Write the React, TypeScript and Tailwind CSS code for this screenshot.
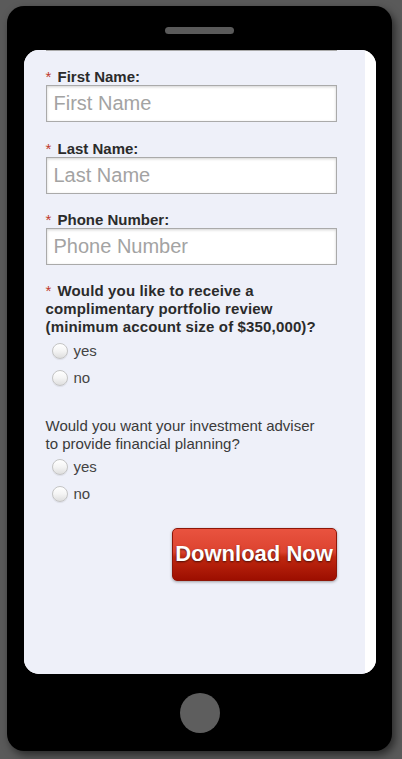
import React from "react";

const font = { fontFamily: '"Liberation Sans", Arial, sans-serif' };

function Field({ label, placeholder, mt }: { label: string; placeholder: string; mt: string }) {
  return (
    <div className={`flex flex-col w-[291px] ${mt}`}>
      <div className="flex text-[15px] leading-[16px] font-bold text-[#2b2b2b] whitespace-nowrap">
        <span className="w-[12px] font-normal text-[#c0392b]">*</span>
        <span>{label}</span>
      </div>
      <input
        readOnly
        placeholder={placeholder}
        className="h-[37px] w-[291px] border border-[#aaaaaa] bg-white px-[7px] text-[20px] text-[#333] placeholder:text-[#a3a3a3] shadow-[inset_0_1px_3px_rgba(0,0,0,0.18)] outline-none"
        style={font}
      />
    </div>
  );
}

function Radio({ label }: { label: string }) {
  return (
    <div className="h-[27px] flex items-center pl-[6px] gap-[6px]">
      <span className="w-[16px] h-[16px] rounded-full border border-[#c4c4c4] bg-[linear-gradient(to_bottom,#ffffff_0%,#f4f4f4_50%,#dedede_100%)] shadow-[0_1px_1px_rgba(0,0,0,0.08)]" />
      <span className="text-[15px] leading-[18px] text-[#444]">{label}</span>
    </div>
  );
}

export default function App() {
  return (
    <div className="w-[402px] h-[759px] bg-[#5a5a5a] overflow-hidden pt-[6px] pl-[7px]" style={font}>
      <div className="w-[385px] h-[745px] bg-black rounded-[17px] shadow-[3px_4px_8px_rgba(0,0,0,0.55)] flex flex-col items-center">
        <div className="mt-[21px] w-[69px] h-[7px] rounded-full bg-[#5a5a5a]" />
        <div className="mt-[16px] w-[352px] h-[624px] rounded-[15px] overflow-hidden bg-white flex">
          <div className="w-[341px] h-full bg-[#eef0f9] pl-[22px] flex flex-col">
            <div className="w-[291px] h-px bg-[#a9a9a9]" />
            <Field label="First Name:" placeholder="First Name" mt="mt-[18px]" />
            <Field label="Last Name:" placeholder="Last Name" mt="mt-[19px]" />
            <Field label="Phone Number:" placeholder="Phone Number" mt="mt-[18px]" />
            <div className="mt-[17px] w-[291px] text-[15px] leading-[18px] font-bold text-[#2b2b2b] tracking-[0.15px]">
              <span className="text-[#c0392b] font-normal pr-[6px]">*</span>
              <span>Would you like to receive a complimentary portfolio review (minimum account size of $350,000)?</span>
            </div>
            <div className="mt-[1px] flex flex-col">
              <Radio label="yes" />
              <Radio label="no" />
            </div>
            <div className="mt-[26px] w-[282px] text-[15px] leading-[18px] text-[#3a3a3a]">
              Would you want your investment adviser to provide financial planning?
            </div>
            <div className="flex flex-col">
              <Radio label="yes" />
              <Radio label="no" />
            </div>
            <div className="mt-[21px] w-[291px] flex justify-end">
              <button
                className="w-[165px] h-[53px] rounded-[5px] border border-[#8e1608] bg-[linear-gradient(to_bottom,#e9533f_0%,#dc4330_45%,#c02810_55%,#9c0e00_100%)] shadow-[0_1px_3px_rgba(0,0,0,0.35)] flex items-center justify-center text-white font-bold text-[22px] leading-[24px] pb-[2px] [text-shadow:0_1px_2px_rgba(0,0,0,0.6)] whitespace-nowrap"
                style={font}
              >
                Download Now
              </button>
            </div>
          </div>
          <div className="flex-1 h-full bg-white" />
        </div>
        <div className="mt-[19px] w-[40px] h-[40px] rounded-full bg-[#5e5e5e]" />
      </div>
    </div>
  );
}
